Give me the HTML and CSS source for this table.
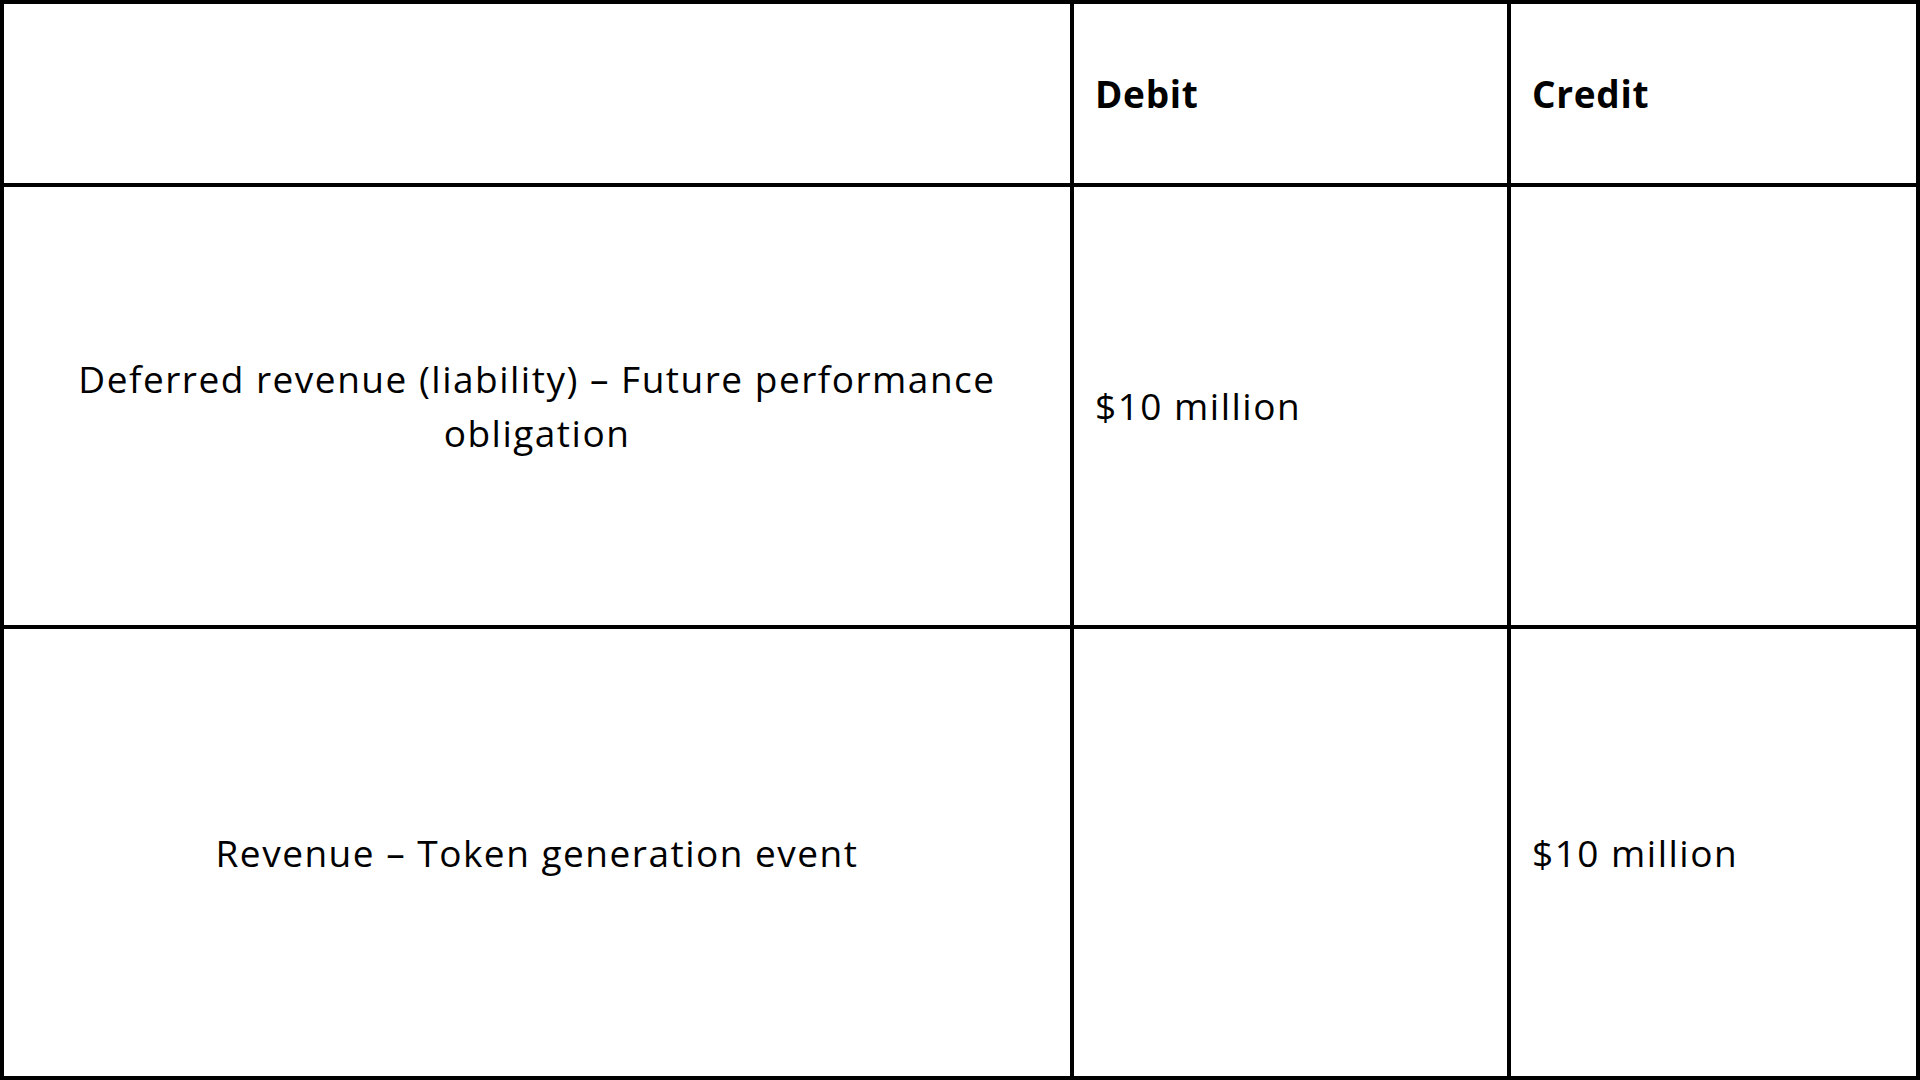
FILE: index.html
```html
<!DOCTYPE html>
<html>
<head>
<meta charset="utf-8">
<link rel="stylesheet" href="styles.css">
</head>
<body>
<div class="table">
  <div class="cell"></div>
  <div class="cell head">Debit</div>
  <div class="cell head">Credit</div>

  <div class="cell label">Deferred revenue (liability) – Future performance obligation</div>
  <div class="cell">$10 million</div>
  <div class="cell"></div>

  <div class="cell label">Revenue – Token generation event</div>
  <div class="cell"></div>
  <div class="cell">$10 million</div>
</div>
</body>
</html>
```

FILE: styles.css
```css
html, body {
  margin: 0;
  padding: 0;
  background: #fff;
}

.table {
  width: 1920px;
  height: 1080px;
  box-sizing: border-box;
  background: #000;
  padding: 4px;
  display: grid;
  grid-template-columns: 1066px 433px 1fr;
  grid-template-rows: 179px 438px 1fr;
  gap: 4px;
  font-family: "Open Sans", "Liberation Sans", sans-serif;
  font-size: 37px;
  letter-spacing: 1.5px;
  color: #000;
}

.cell {
  background: #fff;
  display: flex;
  align-items: center;
  padding: 0 21px;
  line-height: 54px;
}

.head {
  font-weight: 700;
  letter-spacing: 0.7px;
}

.label {
  justify-content: center;
  text-align: center;
  padding: 0 60px;
}
```
